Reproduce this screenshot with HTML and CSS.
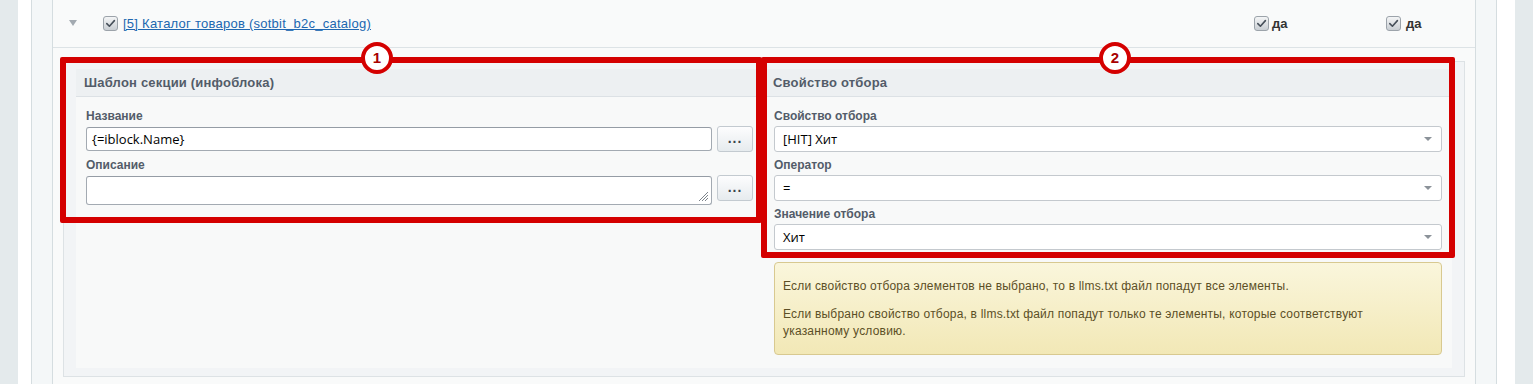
FILE: index.html
```html
<!DOCTYPE html>
<html lang="ru">

<head>
    <meta charset="UTF-8">
    <title>Настройки llms.txt</title>
    <link rel="stylesheet" href="styles.css">
</head>

<body>
    <div class="frame">
        <div class="panel">
            <div class="row">
                <div class="row-head">
                    <svg class="caret" width="8" height="6" viewBox="0 0 8 6">
                        <polygon points="0,0 8,0 4,6"></polygon>
                    </svg>
                    <span class="check">
                        <svg width="15" height="15" viewBox="0 0 15 15">
                            <path d="M3.8 7.6 L6.4 10.2 L11.4 4.6"></path>
                        </svg>
                    </span>
                    <a class="iblock-link" href="#">[5] Каталог товаров (sotbit_b2c_catalog)</a>
                    <div class="flags">
                        <div class="flag">
                            <span class="check">
                                <svg width="15" height="15" viewBox="0 0 15 15">
                                    <path d="M3.8 7.6 L6.4 10.2 L11.4 4.6"></path>
                                </svg>
                            </span>
                            <b>да</b>
                        </div>
                        <div class="flag flag-last">
                            <span class="check">
                                <svg width="15" height="15" viewBox="0 0 15 15">
                                    <path d="M3.8 7.6 L6.4 10.2 L11.4 4.6"></path>
                                </svg>
                            </span>
                            <b>да</b>
                        </div>
                    </div>
                </div>

                <div class="settings">
                    <div class="cols">
                        <div class="col col-left">
                            <div class="col-title">Шаблон секции (инфоблока)</div>
                            <div class="col-body">
                                <div class="label">Название</div>
                                <div class="field-line">
                                    <div class="input">{=iblock.Name}</div>
                                    <div class="dots">...</div>
                                </div>
                                <div class="label">Описание</div>
                                <div class="field-line field-top">
                                    <div class="input textarea">
                                        <svg class="grip" width="11" height="11" viewBox="0 0 11 11">
                                            <path d="M10 1 L1 10 M10 4 L4 10 M10 7 L7 10"></path>
                                        </svg>
                                    </div>
                                    <div class="dots">...</div>
                                </div>
                            </div>
                        </div>

                        <div class="col col-right">
                            <div class="col-title">Свойство отбора</div>
                            <div class="col-body">
                                <div class="label">Свойство отбора</div>
                                <div class="select">[HIT] Хит</div>
                                <div class="label">Оператор</div>
                                <div class="select">=</div>
                                <div class="label">Значение отбора</div>
                                <div class="select">Хит</div>
                                <div class="note">
                                    <p>Если свойство отбора элементов не выбрано, то в llms.txt файл попадут все элементы.</p>
                                    <p>Если выбрано свойство отбора, в llms.txt файл попадут только те элементы, которые соответствуют указанному условию.</p>
                                </div>
                            </div>
                        </div>
                    </div>
                </div>
            </div>
        </div>
    </div>

    <!-- пометки поверх скриншота -->
    <div class="marks">
        <div class="mark-box mark-box1"></div>
        <div class="mark-box mark-box2"></div>
        <div class="badge badge1">1</div>
        <div class="badge badge2">2</div>
    </div>
</body>

</html>
```

FILE: styles.css
```css
body {
    margin: 0;
    background: #e4eaec;
    font-family: "Liberation Sans", Arial, sans-serif;
    overflow: hidden;
    position: relative;
    height: 384px;
}

.frame {
    margin-left: 18px;
    width: 1497px;
    height: 384px;
    background: #fff;
    padding-left: 13px;
    box-sizing: border-box;
}

.panel {
    width: 1466px;
    height: 384px;
    border-left: 1px solid #d5dde0;
    border-right: 1px solid #d5dde0;
    background: #f4f7f8;
    padding: 0 20px;
    box-sizing: border-box;
}

.row {
    height: 384px;
    border-left: 1px solid #d5dde0;
    border-right: 1px solid #d5dde0;
    background: #f9fafa;
}

/* шапка инфоблока */
.row-head {
    height: 47px;
    border-bottom: 1px solid #dde3e6;
    display: flex;
    align-items: center;
    padding-left: 16px;
}

.caret {
    fill: #a3aab1;
    margin-right: 26px;
    margin-top: -1px;
}

.check {
    display: inline-block;
    width: 15px;
    height: 15px;
    box-sizing: border-box;
    border: 1px solid #9ca3aa;
    border-radius: 3px;
    background: linear-gradient(#f4f5f6, #c9ced3);
    position: relative;
}

.check svg {
    position: absolute;
    top: -1px;
    left: -1px;
    fill: none;
    stroke: #47505a;
    stroke-width: 1.6;
    stroke-linecap: round;
    stroke-linejoin: round;
}

.iblock-link {
    margin-left: 5px;
    font-size: 13px;
    letter-spacing: 0.25px;
    color: #2067b0;
    text-decoration: underline;
}

.flags {
    margin-left: auto;
    display: flex;
}

.flag {
    width: 132px;
    display: flex;
    align-items: center;
}

.flag b {
    font-size: 13px;
    color: #333;
    margin-left: 3px;
}

.flag-last {
    width: 89px;
}

.flag-last b {
    margin-left: 5px;
}

/* блок настроек */
.settings {
    margin: 13px 10px 0;
    border: 1px solid #dde2e5;
    background: #f2f4f6;
    padding: 7px 12px 8px;
}

.cols {
    display: grid;
    grid-template-columns: 680px 687px;
    column-gap: 9px;
    align-items: start;
    background: #f8f9f9;
}

.col-title {
    height: 27px;
    line-height: 27px;
    background: #edf0f2;
    border-bottom: 1px solid #dce1e5;
    padding-left: 8px;
    font-size: 13px;
    font-weight: 700;
    letter-spacing: 0.2px;
    color: #535c69;
}

.col-body {
    padding: 12px 3px 0 10px;
}

.col-right .col-body {
    padding: 12px 10px 13px 9px;
}

.label {
    font-size: 12px;
    font-weight: 700;
    line-height: 14px;
    color: #535c69;
    margin-top: 6px;
}

.col-body .label:first-child {
    margin-top: 0;
}

.field-line {
    display: flex;
    align-items: center;
    gap: 5px;
    margin-top: 3px;
    height: 26px;
}

.field-top {
    align-items: flex-start;
    height: 30px;
}

.input {
    flex: 1;
    height: 24px;
    box-sizing: border-box;
    border: 1px solid #a3aab2;
    border-top-color: #959ca5;
    border-radius: 3px;
    background: #fff;
    padding-left: 5px;
    font-family: "Open Sans", sans-serif;
    font-size: 13px;
    line-height: 22px;
    color: #000;
}

.textarea {
    height: 29px;
    margin-top: 1px;
    position: relative;
}

.grip {
    position: absolute;
    right: 2px;
    bottom: 2px;
    stroke: #7d848b;
    stroke-width: 1;
    fill: none;
}

.dots {
    width: 36px;
    height: 26px;
    box-sizing: border-box;
    border: 1px solid #c3cad0;
    border-radius: 3px;
    background: linear-gradient(#fdfdfe, #e6ebee);
    text-align: center;
    font-size: 14px;
    font-weight: 700;
    line-height: 22px;
    letter-spacing: 1px;
    color: #3a434d;
}

.select {
    margin-top: 3px;
    height: 26px;
    box-sizing: border-box;
    border: 1px solid #c4c9ce;
    border-radius: 3px;
    background: #fff;
    padding-left: 8px;
    font-family: "Open Sans", sans-serif;
    font-size: 13px;
    line-height: 24px;
    color: #000;
    position: relative;
}

.select:after {
    content: "";
    position: absolute;
    right: 9px;
    top: 10px;
    border-left: 4px solid transparent;
    border-right: 4px solid transparent;
    border-top: 4px solid #8b9299;
}

.note {
    margin-top: 12px;
    border: 1px solid #d8c990;
    border-radius: 4px;
    background: linear-gradient(#faf6dc, #f2e8b6);
    padding: 15px 10px 14px 8px;
    font-size: 12px;
    letter-spacing: 0.2px;
    line-height: 17px;
    color: #5c4f26;
}

.note p {
    margin: 0 0 11px;
}

.note p:last-child {
    margin-bottom: 0;
}

/* красные рамки и номера */
.marks {
    position: absolute;
    top: 0;
    left: 0;
    width: 100%;
    height: 100%;
    pointer-events: none;
}

.mark-box {
    position: absolute;
    top: 57px;
    border: 6px solid #d40000;
    border-radius: 2px;
    box-sizing: border-box;
}

.mark-box1 {
    left: 60px;
    width: 702px;
    height: 166px;
}

.mark-box2 {
    left: 761px;
    width: 694px;
    height: 201px;
}

.badge {
    position: absolute;
    top: 42px;
    width: 32px;
    height: 32px;
    box-sizing: border-box;
    border: 4px solid #d40000;
    border-radius: 50%;
    background: #fff;
    text-align: center;
    font-size: 15px;
    font-weight: 700;
    line-height: 24px;
    color: #a80000;
}

.badge1 {
    left: 361px;
}

.badge2 {
    left: 1099px;
}
```
